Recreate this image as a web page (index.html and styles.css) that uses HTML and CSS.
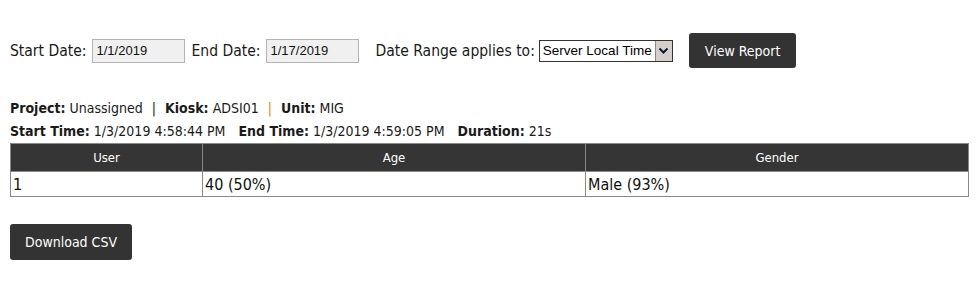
FILE: index.html
```html
<!DOCTYPE html>
<html lang="en">
<head>
  <meta charset="UTF-8" />
  <title>Kiosk Report</title>
  <link rel="stylesheet" href="styles.css">
</head>
<body>

<div class="filters">
  <label for="startDate">Start Date:</label>
  <input type="text" id="startDate" class="date-input" value="1/1/2019">
  <label for="endDate">End Date:</label>
  <input type="text" id="endDate" class="date-input" value="1/17/2019">
  <label for="range" class="range-label">Date Range applies to:</label>
  <span class="select-wrap">
    <select id="range" class="range-select">
      <option selected>Server Local Time</option>
      <option>UTC</option>
    </select>
    <span class="select-arrow">
      <svg width="11" height="8" viewBox="0 0 11 8"><path d="M1.5 1.5 L5.5 5.5 L9.5 1.5" fill="none" stroke="#0a1a3a" stroke-width="2"/></svg>
    </span>
  </span>
  <button class="btn">View Report</button>
</div>

<div class="info">
  <p><b>Project:</b> Unassigned <span class="sep">|</span> <b>Kiosk:</b> ADSI01 <span class="sep orange">|</span> <b>Unit:</b> MIG</p>
  <p><b>Start Time:</b> 1/3/2019 4:58:44 PM <span class="gap"></span><b>End Time:</b> 1/3/2019 4:59:05 PM <span class="gap"></span><b>Duration:</b> 21s</p>
</div>

<table class="report">
  <thead>
    <tr>
      <th class="col-user">User</th>
      <th class="col-age">Age</th>
      <th>Gender</th>
    </tr>
  </thead>
  <tbody>
    <tr>
      <td>1</td>
      <td>40 (50%)</td>
      <td>Male (93%)</td>
    </tr>
  </tbody>
</table>

<button class="btn download">Download CSV</button>

</body>
</html>
```

FILE: styles.css
```css
body {
  margin: 0;
  padding: 0 10px;
  font-family: "DejaVu Sans Condensed", "DejaVu Sans", sans-serif;
  font-stretch: condensed;
  color: #1a1a1a;
  background-color: #fff;
}

.filters {
  display: flex;
  align-items: center;
  margin-top: 33px;
  height: 35px;
  font-size: 15.5px;
}

.filters label {
  margin-right: 5px;
}

.date-input {
  box-sizing: border-box;
  width: 93px;
  height: 24px;
  margin: 0 7px 0 0;
  padding: 0 4px;
  border: 1px solid #b4b4b4;
  background-color: #f0f0f0;
  font-family: "Liberation Sans", Arial, sans-serif;
  font-size: 13px;
  color: #111;
}

.range-label {
  margin-left: 10px;
}

.select-wrap {
  position: relative;
  display: inline-block;
  width: 134px;
  height: 22px;
  margin-left: -1px;
}

.range-select {
  appearance: none;
  -webkit-appearance: none;
  box-sizing: border-box;
  width: 134px;
  height: 22px;
  margin: 0;
  padding: 0 0 0 3px;
  border: 1px solid #333;
  border-radius: 0;
  background-color: #fff;
  font-family: "Liberation Sans", Arial, sans-serif;
  font-size: 13.5px;
  color: #000;
}

.select-arrow {
  position: absolute;
  top: 1px;
  right: 1px;
  width: 17px;
  height: 20px;
  box-sizing: border-box;
  border-left: 1px solid #888;
  background-color: #d4d0c8;
  display: flex;
  align-items: center;
  justify-content: center;
  pointer-events: none;
}

.btn {
  height: 35px;
  padding: 0 16px;
  border: none;
  border-radius: 3px;
  background-color: #333;
  color: #fff;
  font-family: inherit;
  font-stretch: condensed;
  font-size: 14px;
  cursor: pointer;
}

.filters .btn {
  margin-left: 16px;
}

.info {
  margin-top: 29px;
  font-size: 14px;
}

.info p {
  margin: 0;
  line-height: 23px;
}

.sep {
  margin: 0 5px;
}

.orange {
  color: #d9860f;
}

.gap {
  display: inline-block;
  width: 9px;
}

.report {
  width: 100%;
  margin-top: 0;
  border-collapse: collapse;
  border: 1px solid #888;
}

.report th {
  height: 27px;
  padding: 0;
  background-color: #353535;
  color: #fff;
  font-size: 13px;
  font-weight: normal;
  border: 1px solid #888;
}

.report td {
  height: 24px;
  padding: 0 2px;
  font-size: 16px;
  color: #111;
  border: 1px solid #888;
}

.col-user {
  width: 191px;
}

.col-age {
  width: 382px;
}

.download {
  margin-top: 27px;
  padding: 0 15px;
  height: 36px;
}
```
